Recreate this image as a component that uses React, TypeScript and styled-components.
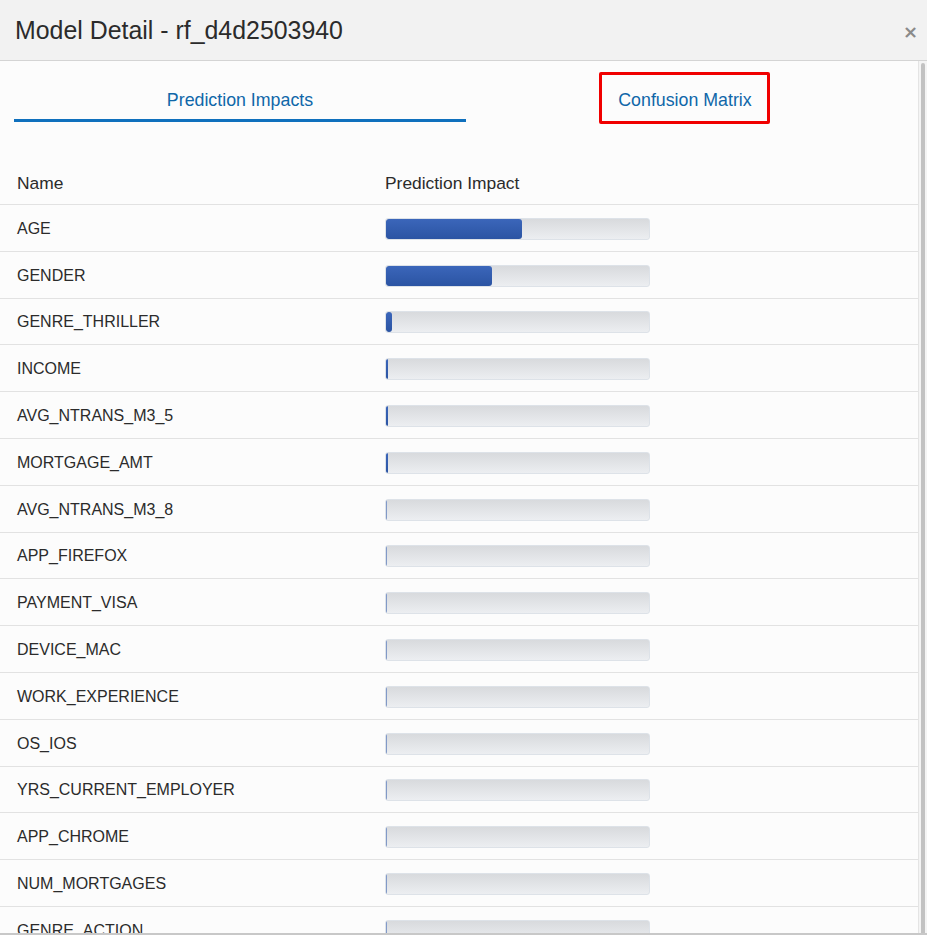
import React from "react";
import styled, { createGlobalStyle } from "styled-components";

const Global = createGlobalStyle`
  html, body { margin: 0; padding: 0; background: #fcfcfc; }
  body { font-family: "Liberation Sans", Arial, sans-serif; color: #333; }
`;

const Dialog = styled.div`
  height: 935px;
  display: flex;
  flex-direction: column;
  box-sizing: border-box;
  border-bottom: 2px solid #c8c8c8;
  overflow: hidden;
`;

const Header = styled.header`
  height: 61px;
  flex: none;
  box-sizing: border-box;
  display: flex;
  align-items: center;
  justify-content: space-between;
  padding: 1px 9px 0 15px;
  background: #f2f2f2;
  border-bottom: 1px solid #d4d4d4;
`;

const Title = styled.h1`
  margin: 0;
  font-size: 24.9px;
  font-weight: 400;
  color: #2b2b2b;
`;

const Close = styled.button`
  border: none;
  background: none;
  padding: 0;
  font-family: "DejaVu Sans", sans-serif;
  font-size: 18px;
  font-weight: 700;
  color: #8a8a8a;
  line-height: 1;
  margin-top: 2px;
`;

const Body = styled.div`
  flex: 1;
  display: flex;
  min-height: 0;
`;

const Content = styled.div`
  flex: 1;
  min-width: 0;
  border-right: 1px solid #e4e4e4;
`;

const Scrollbar = styled.div`
  width: 8px;
  flex: none;
  padding: 2px 2px 0 2px;
  box-sizing: border-box;
  background: #f4f4f4;
`;

const Thumb = styled.div`
  height: 100%;
  background: #c2c2c2;
  border-radius: 3px 3px 0 0;
`;

const Tabs = styled.nav`
  display: grid;
  grid-template-columns: 452px 438px;
  padding-left: 14px;
  height: 61px;
`;

const Tab = styled.div<{ $active?: boolean }>`
  display: flex;
  align-items: flex-end;
  justify-content: center;
  padding-bottom: 9px;
  font-size: 17.8px;
  line-height: 20px;
  color: #0f67a9;
  border-bottom: 3px solid ${(p) => (p.$active ? "#0f70bd" : "transparent")};
  height: 61px;
  box-sizing: border-box;
`;

const Marked = styled.span`
  position: relative;
  &::after {
    content: "";
    position: absolute;
    top: -18px;
    bottom: -14px;
    left: -19px;
    right: -18px;
    border: 3px solid #f00000;
    border-radius: 2px;
  }
`;

const Table = styled.div`
  margin-top: 39px;
`;

const HeadRow = styled.div`
  display: grid;
  grid-template-columns: 368px 1fr;
  padding-left: 17px;
  padding-top: 1px;
  height: 43px;
  box-sizing: border-box;
  align-items: center;
  font-size: 17.4px;
  color: #2b2b2b;
`;

const Row = styled.div`
  display: grid;
  grid-template-columns: 368px 1fr;
  padding-left: 17px;
  padding-top: 2px;
  height: 46.8px;
  box-sizing: border-box;
  align-items: center;
  border-top: 1px solid #e2e2e2;
  font-size: 16px;
  color: #2b2b2b;
`;

const Track = styled.div`
  width: 265px;
  height: 22px;
  box-sizing: border-box;
  border: 1px solid #dde2e8;
  border-radius: 3px;
  background: linear-gradient(#d8dadd, #eceef1);
  overflow: hidden;
`;

const Fill = styled.div`
  height: 100%;
  border-radius: 3px;
  background: linear-gradient(#3b66ba, #2b54a3);
`;

const rows: [string, number][] = [
  ["AGE", 136],
  ["GENDER", 106],
  ["GENRE_THRILLER", 6],
  ["INCOME", 2],
  ["AVG_NTRANS_M3_5", 2],
  ["MORTGAGE_AMT", 1.5],
  ["AVG_NTRANS_M3_8", 1.2],
  ["APP_FIREFOX", 1],
  ["PAYMENT_VISA", 1],
  ["DEVICE_MAC", 1],
  ["WORK_EXPERIENCE", 1],
  ["OS_IOS", 1],
  ["YRS_CURRENT_EMPLOYER", 1],
  ["APP_CHROME", 1],
  ["NUM_MORTGAGES", 1],
  ["GENRE_ACTION", 1],
];

export default function App() {
  return (
    <>
      <Global />
      <Dialog>
        <Header>
          <Title>Model Detail - rf_d4d2503940</Title>
          <Close aria-label="close">×</Close>
        </Header>
        <Body>
          <Content>
            <Tabs>
              <Tab $active>Prediction Impacts</Tab>
              <Tab>
                <Marked>Confusion Matrix</Marked>
              </Tab>
            </Tabs>
            <Table>
              <HeadRow>
                <span>Name</span>
                <span>Prediction Impact</span>
              </HeadRow>
              {rows.map(([name, w]) => (
                <Row key={name}>
                  <span>{name}</span>
                  <Track>
                    <Fill style={{ width: `${w}px`, opacity: w < 1.5 ? 0.55 : 1 }} />
                  </Track>
                </Row>
              ))}
            </Table>
          </Content>
          <Scrollbar>
            <Thumb />
          </Scrollbar>
        </Body>
      </Dialog>
    </>
  );
}
